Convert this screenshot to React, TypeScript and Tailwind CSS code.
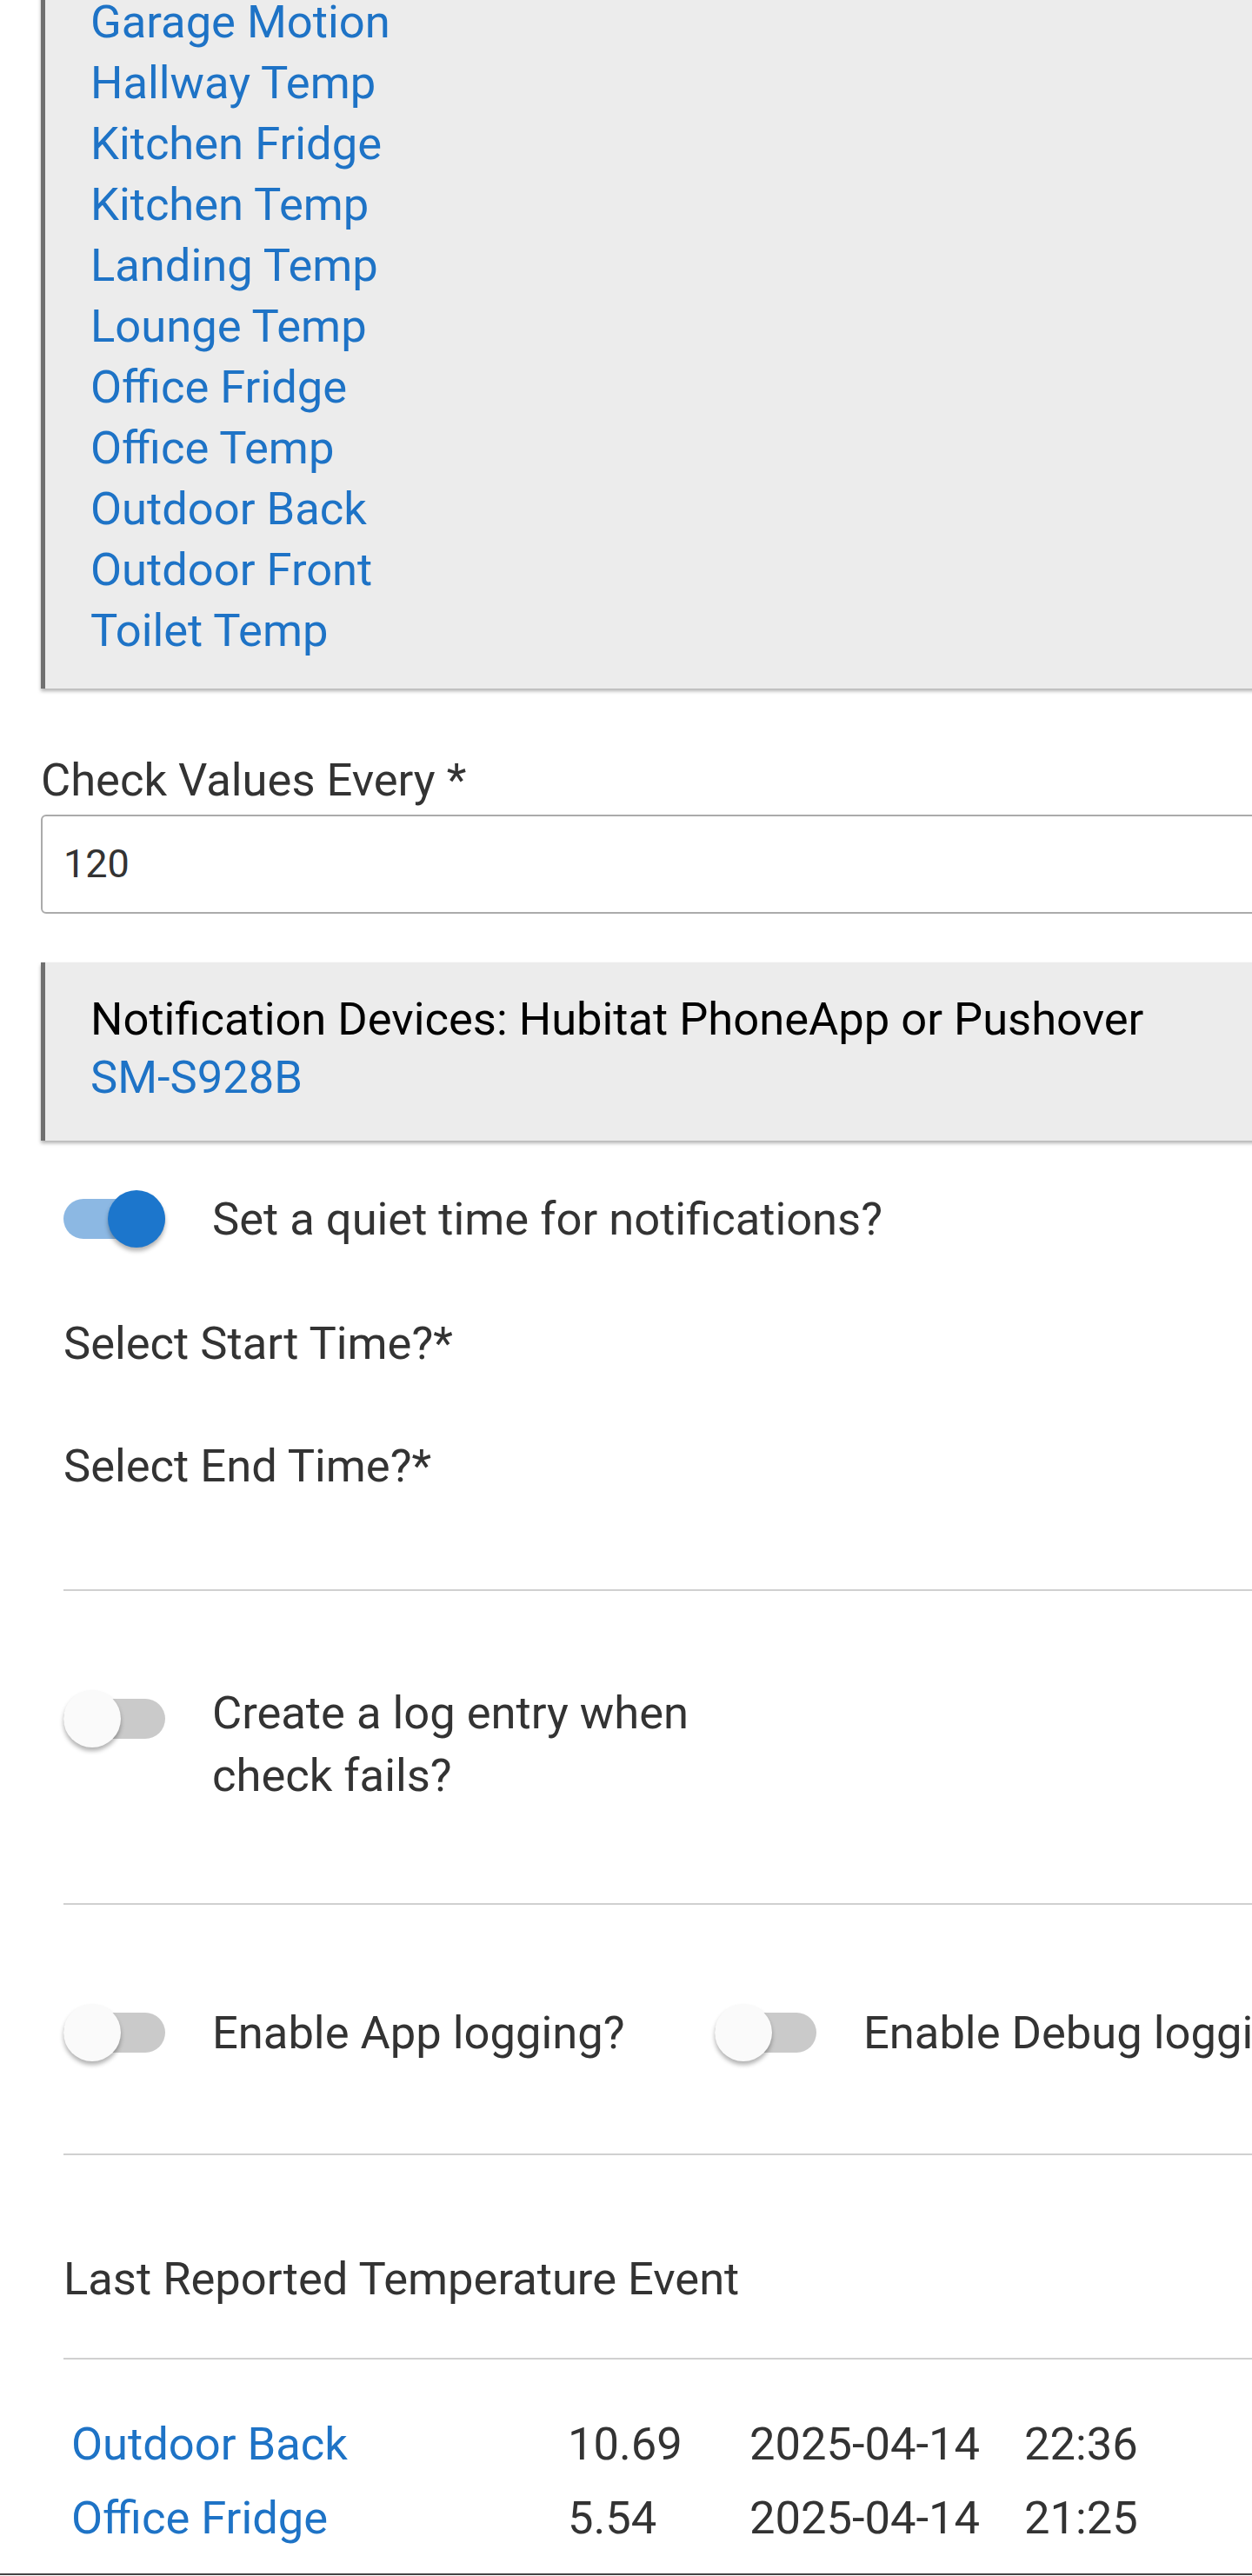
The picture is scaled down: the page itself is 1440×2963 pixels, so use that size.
import React from 'react';

const devices = [
  'Garage Motion',
  'Hallway Temp',
  'Kitchen Fridge',
  'Kitchen Temp',
  'Landing Temp',
  'Lounge Temp',
  'Office Fridge',
  'Office Temp',
  'Outdoor Back',
  'Outdoor Front',
  'Toilet Temp',
];

const lastEvents = [
  { name: 'Outdoor Back', value: '10.69', date: '2025-04-14', time: '22:36' },
  { name: 'Office Fridge', value: '5.54', date: '2025-04-14', time: '21:25' },
];

function Toggle({ on = false }: { on?: boolean }) {
  return (
    <div className="relative h-[66px] w-[117px] flex-shrink-0">
      <div
        className={`absolute left-0 top-[10px] h-[46px] w-[117px] rounded-full ${
          on ? 'bg-[#8cb8e3]' : 'bg-[#cacaca]'
        }`}
      />
      <div
        className={`absolute top-0 h-[66px] w-[66px] rounded-full shadow-[0_4px_5px_rgba(0,0,0,0.3)] ${
          on ? 'right-0 bg-[#1c76cc]' : 'left-0 bg-[#fafafa]'
        }`}
      />
    </div>
  );
}

function Divider() {
  return <div className="h-[2px] bg-[#d0d0d0]" />;
}

export default function App() {
  return (
    <div className="h-[2963px] w-[1440px] overflow-hidden bg-white font-['Roboto',sans-serif] text-[52.5px] text-[#333]">
      <div className="w-[1800px] pl-[47px]">
        {/* device list card, top is scrolled away */}
        <div className="-mt-[40px] border-l-[5px] border-[#707070] bg-[#ececec] pb-[32px] pl-[52px] pt-[30px] leading-[70px] shadow-[0_3px_4px_rgba(0,0,0,0.3)]">
          {devices.map((d) => (
            <div key={d} className="text-[#1e73c6]">
              {d}
            </div>
          ))}
        </div>

        <div className="mt-[75px] leading-[61px]">Check Values Every *</div>
        <div className="mt-[9px] flex h-[114px] items-center rounded-[6px] border-2 border-[#ababab] pl-[24px] text-[45px]">
          120
        </div>

        <div className="mt-[56px] border-l-[5px] border-[#707070] bg-[#ececec] pb-[39px] pl-[52px] pt-[32px] leading-[67px] text-black shadow-[0_3px_4px_rgba(0,0,0,0.3)]">
          <div>Notification Devices: Hubitat PhoneApp or Pushover</div>
          <div className="text-[#1e73c6]">SM-S928B</div>
        </div>

        <div className="pl-[26px]">
          <div className="mt-[57px] flex h-[66px] items-center gap-[54px]">
            <Toggle on />
            <span className="leading-[61px]">Set a quiet time for notifications?</span>
          </div>

          <div className="mt-[80px] leading-[61px]">Select Start Time?*</div>
          <div className="mt-[80px] leading-[61px]">Select End Time?*</div>

          <div className="mt-[111px]">
            <Divider />
          </div>

          <div className="mt-[104px] flex items-start gap-[54px]">
            <div className="mt-[10px]">
              <Toggle />
            </div>
            <div className="w-[560px] leading-[72px]">Create a log entry when check fails?</div>
          </div>

          <div className="mt-[111px]">
            <Divider />
          </div>

          <div className="mt-[114px] flex">
            <div className="flex w-[749px] items-center gap-[54px]">
              <Toggle />
              <span className="leading-[61px]">Enable App logging?</span>
            </div>
            <div className="flex items-center gap-[54px]">
              <Toggle />
              <span className="whitespace-nowrap leading-[61px]">Enable Debug logging?</span>
            </div>
          </div>

          <div className="mt-[106px]">
            <Divider />
          </div>

          <div className="mt-[112px] leading-[61px]">Last Reported Temperature Event</div>

          <div className="mt-[60px]">
            <Divider />
          </div>

          <div className="mt-[55px] pl-[9px] leading-[85px]">
            {lastEvents.map((e) => (
              <div key={e.name} className="flex">
                <span className="w-[571px] text-[#1e73c6]">{e.name}</span>
                <span className="w-[209px]">{e.value}</span>
                <span className="w-[316px]">{e.date}</span>
                <span>{e.time}</span>
              </div>
            ))}
          </div>
        </div>
      </div>
      <div className="mt-[21px] h-[2px] w-full bg-[#444]" />
    </div>
  );
}
